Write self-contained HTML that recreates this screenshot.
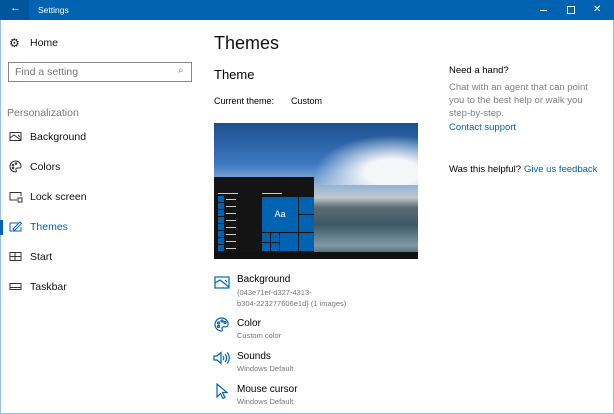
<!DOCTYPE html>
<html><head><meta charset="utf-8"><style>
*{margin:0;padding:0;box-sizing:border-box}
body{width:614px;height:414px;overflow:hidden;background:#fff;font-family:"Liberation Sans",sans-serif;color:#000;position:relative}
.a{position:absolute;white-space:nowrap}
.tb{left:0;top:0;width:614px;height:20px;background:#0063b1}
.nav{font-size:10.5px;color:#111}
.ic{position:absolute}
.g{color:#777}
.l{color:#0063b1}
</style></head><body>
<div class="a tb"></div>
<div class="a" style="left:0;top:0;width:29px;height:20px;background:#00569b"></div>
<div class="a" style="left:10px;top:2px;color:#fff;font-size:11px">←</div>
<div class="a" style="left:38px;top:5px;color:#fff;font-size:8.5px">Settings</div>
<div class="a" style="left:540px;top:10px;width:7px;height:1px;background:#fff"></div>
<div class="a" style="left:567px;top:6px;width:8px;height:8px;border:1px solid #fff"></div>
<div class="a" style="left:593px;top:4px;color:#fff;font-size:10px">✕</div>
<div class="a" style="left:0;top:20px;width:1px;height:394px;background:#9cc3e6"></div>
<div class="a" style="right:0;top:20px;width:1px;height:394px;background:#9cc3e6"></div>
<div class="a" style="left:0;top:413px;width:614px;height:1px;background:#9cc3e6"></div>

<div class="a nav" style="left:9px;top:36px;font-size:12px">⚙</div>
<div class="a nav" style="left:30px;top:37px">Home</div>
<div class="a" style="left:8px;top:62px;width:184px;height:20px;border:1px solid #888"></div>
<div class="a" style="left:15px;top:66px;font-size:10.5px;color:#777">Find a setting</div>
<div class="a" style="left:178px;top:65px;font-size:10px;color:#888">⌕</div>
<div class="a" style="left:7px;top:107px;font-size:10.5px;color:#777">Personalization</div>

<svg class="ic" style="left:9px;top:131px" width="14" height="12" viewBox="0 0 14 12" fill="none" stroke="#333"><rect x="1" y="1.5" width="11" height="8"/><path d="M1 7l4-3 7 5M9 4l2 2"/></svg>
<div class="a nav" style="left:30px;top:131px">Background</div>
<svg class="ic" style="left:9px;top:160px" width="13" height="13" viewBox="0 0 13 13" fill="none" stroke="#333"><path d="M6.5 1a5.5 5.5 0 1 0 0 11c1 0 1-1 .5-2s0-2 1.5-2h2c1 0 1.5-1 1.5-2A5.5 5 0 0 0 6.5 1z"/><circle cx="4" cy="5" r=".8"/><circle cx="7" cy="3.5" r=".8"/><circle cx="4" cy="8" r=".8"/></svg>
<div class="a nav" style="left:30px;top:161px">Colors</div>
<svg class="ic" style="left:9px;top:191px" width="14" height="12" viewBox="0 0 14 12" fill="none" stroke="#333"><path d="M8 9H1V1.5h11V5"/><rect x="9" y="7" width="4" height="4"/></svg>
<div class="a nav" style="left:30px;top:191px">Lock screen</div>
<div class="a" style="left:0;top:220px;width:3px;height:15px;background:#0063b1"></div>
<svg class="ic" style="left:9px;top:221px" width="14" height="12" viewBox="0 0 14 12" fill="none" stroke="#0063b1"><path d="M9 2H1v8h11V6"/><path d="M4 8l7-7 1.5 1.5-7 7z"/></svg>
<div class="a nav" style="left:30px;top:221px;color:#0063b1">Themes</div>
<svg class="ic" style="left:9px;top:251px" width="14" height="12" viewBox="0 0 14 12" fill="none" stroke="#333"><rect x="1" y="1.5" width="11" height="8"/><path d="M1 5.5h11M6 1.5v8"/></svg>
<div class="a nav" style="left:30px;top:251px">Start</div>
<svg class="ic" style="left:9px;top:281px" width="14" height="12" viewBox="0 0 14 12" fill="none" stroke="#333"><rect x="1" y="2.5" width="11" height="6"/><path d="M1 6.5h11"/></svg>
<div class="a nav" style="left:30px;top:281px">Taskbar</div>

<div class="a" style="left:214px;top:33px;font-size:18px;color:#111">Themes</div>
<div class="a" style="left:214px;top:67px;font-size:13px">Theme</div>
<div class="a" style="left:214px;top:96px;font-size:9px">Current theme:</div>
<div class="a" style="left:291px;top:96px;font-size:9px">Custom</div>

<div class="a" style="left:214px;top:123px;width:204px;height:136px;background:linear-gradient(180deg,#1d4f8f 0%,#3c78c0 30%,#8fb2d8 45%,#c0c8cc 55%,#5a6c74 62%,#3e5868 75%,#7e9aa8 90%,#3a4a50 100%)"></div>
<div class="a" style="left:314px;top:135px;width:104px;height:50px;background:radial-gradient(ellipse at 75% 75%,#f4f6f8 25%,rgba(240,244,248,0) 70%)"></div>
<div class="a" style="left:214px;top:177px;width:100px;height:75px;background:#141414"></div>
<div class="a" style="left:214px;top:252px;width:204px;height:7px;background:#101010"></div>
<div class="a" style="left:262px;top:197px;width:36px;height:35px;background:#0063b1;color:#fff;font-size:9px;text-align:center;line-height:35px">Aa</div>
<div class="a" style="left:299px;top:197px;width:15px;height:17px;background:#0063b1"></div>
<div class="a" style="left:299px;top:215px;width:15px;height:17px;background:#0063b1"></div>
<div class="a" style="left:262px;top:233px;width:8px;height:9px;background:#0063b1"></div>
<div class="a" style="left:271px;top:233px;width:8px;height:9px;background:#0063b1"></div>
<div class="a" style="left:262px;top:243px;width:8px;height:8px;background:#0063b1"></div>
<div class="a" style="left:271px;top:243px;width:8px;height:8px;background:#0063b1"></div>
<div class="a" style="left:280px;top:233px;width:18px;height:18px;background:#0063b1"></div>
<div class="a" style="left:299px;top:233px;width:15px;height:18px;background:#0063b1"></div>
<div class="a" style="left:218px;top:196px;width:6px;height:55px;background:repeating-linear-gradient(180deg,#0063b1 0 6px,#141414 6px 7px)"></div>
<div class="a" style="left:226px;top:199px;width:10px;height:52px;background:repeating-linear-gradient(180deg,#ccc 0 1px,transparent 1px 7px)"></div>
<div class="a" style="left:218px;top:193px;width:20px;height:1px;background:#ccc"></div>
<div class="a" style="left:262px;top:193px;width:20px;height:1px;background:#ccc"></div>

<svg class="ic" style="left:214px;top:276px" width="16" height="14" viewBox="0 0 16 14" fill="none" stroke="#0063b1" stroke-width="1.2"><rect x="1" y="1" width="14" height="11"/><path d="M1 7l5-3 9 7M11 4l2 2"/></svg>
<div class="a" style="left:237px;top:274px;font-size:10px">Background</div>
<div class="a g" style="left:237px;top:287px;font-size:7.5px;line-height:11px">{043e71ef-d327-4313-<br>b304-223277606e1d} (1 images)</div>
<svg class="ic" style="left:214px;top:317px" width="15" height="15" viewBox="0 0 15 15" fill="none" stroke="#0063b1" stroke-width="1.2"><path d="M7.5 1a6.5 6.5 0 1 0 0 13c1 0 1.2-1 .6-2s0-2.200 1.6-2.2h2.3c1.2 0 2-1 2-2.3A6.5 6 0 0 0 7.5 1z"/><circle cx="4.5" cy="6" r="1"/><circle cx="8" cy="4" r="1"/><circle cx="4.5" cy="9.5" r="1"/><circle cx="11" cy="5.5" r="1"/></svg>
<div class="a" style="left:237px;top:318px;font-size:10px">Color</div>
<div class="a g" style="left:237px;top:331px;font-size:7.5px">Custom color</div>
<svg class="ic" style="left:213px;top:351px" width="17" height="14" viewBox="0 0 17 14" fill="none" stroke="#0063b1" stroke-width="1.2"><path d="M1 5h3l4-3.5v11L4 9H1z"/><path d="M10 5a3 3 0 0 1 0 4M12 3a6 6 0 0 1 0 8M14 1.5a8 8 0 0 1 0 11"/></svg>
<div class="a" style="left:237px;top:351px;font-size:10px">Sounds</div>
<div class="a g" style="left:237px;top:364px;font-size:7.5px">Windows Default</div>
<svg class="ic" style="left:216px;top:383px" width="12" height="17" viewBox="0 0 12 17" fill="none" stroke="#0063b1" stroke-width="1.2"><path d="M1 1v13l3.5-3.5 2.5 5 2-1-2.5-5H11z"/></svg>
<div class="a" style="left:237px;top:384px;font-size:10px">Mouse cursor</div>
<div class="a g" style="left:237px;top:397px;font-size:7.5px">Windows Default</div>

<div class="a" style="left:449px;top:65px;font-size:9.5px">Need a hand?</div>
<div class="a g" style="left:449px;top:81px;font-size:9.5px;line-height:13px;color:#808080">Chat with an agent that can point<br>you to the best help or walk you<br>step-by-step.</div>
<div class="a l" style="left:449px;top:122px;font-size:9.5px">Contact support</div>
<div class="a" style="left:449px;top:164px;font-size:9.5px">Was this helpful?</div>
<div class="a l" style="left:524px;top:164px;font-size:9.5px">Give us feedback</div>
</body></html>
